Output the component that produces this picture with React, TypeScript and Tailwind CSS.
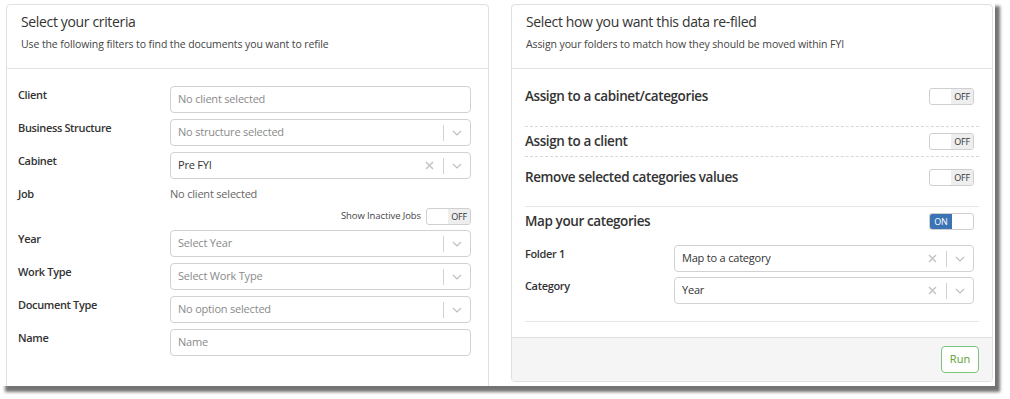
import React from "react";

const font = { fontFamily: '"Open Sans", "Noto Sans", sans-serif' };

function Chevron() {
  return (
    <svg width="10" height="6" viewBox="0 0 10 6" className="block">
      <path d="M1 1 L5 5 L9 1" fill="none" stroke="#bdbdbd" strokeWidth="1.1" />
    </svg>
  );
}

function Cross() {
  return (
    <svg width="9" height="9" viewBox="0 0 9 9" className="block">
      <path d="M1 1 L8 8 M8 1 L1 8" fill="none" stroke="#c4c4c4" strokeWidth="1.5" />
    </svg>
  );
}

function Select({ value, placeholder, clear }: { value?: string; placeholder?: string; clear?: boolean }) {
  return (
    <div className="flex h-[27px] items-center rounded-[4px] border border-[#d2d2d2] bg-white">
      <div
        className={
          "flex-1 pl-[7px] text-[11px] tracking-[-0.2px] " + (value ? "text-[#333]" : "text-[#8a8a8a]")
        }
      >
        {value ?? placeholder}
      </div>
      {clear && (
        <div className="mr-[9px]">
          <Cross />
        </div>
      )}
      <div className="h-[16px] w-px bg-[#d2d2d2]" />
      <div className="flex w-[26px] justify-center">
        <Chevron />
      </div>
    </div>
  );
}

function Input({ placeholder }: { placeholder: string }) {
  return (
    <div className="flex h-[27px] items-center rounded-[4px] border border-[#d2d2d2] bg-white pl-[7px] text-[11px] tracking-[-0.2px] text-[#8a8a8a]">
      {placeholder}
    </div>
  );
}

function Toggle({ on }: { on?: boolean }) {
  return (
    <div className="flex h-[17px] w-[45px] shrink-0 overflow-hidden rounded-[3px] border border-[#cfcfcf] bg-white text-[9px] leading-none tracking-[-0.2px]">
      {on ? (
        <>
          <div className="flex w-[22px] items-center justify-center bg-[#3a74b4] text-white">ON</div>
          <div className="flex-1" />
        </>
      ) : (
        <>
          <div className="flex-1" />
          <div className="flex w-[22px] items-center justify-center bg-[#eeeeee] text-[#333]">OFF</div>
        </>
      )}
    </div>
  );
}

function Label({ children, w }: { children: React.ReactNode; w: string }) {
  return (
    <div className={w + " shrink-0 text-[11px] leading-[17px] font-semibold tracking-[-0.35px] text-[#333]"}>
      {children}
    </div>
  );
}

function Row({ label, children }: { label: string; children: React.ReactNode }) {
  return (
    <div className="flex">
      <Label w="w-[152px]">{label}</Label>
      <div className="w-[301px]">{children}</div>
    </div>
  );
}

function Header({ title, sub }: { title: string; sub: string }) {
  return (
    <div className="h-[64px] border-b border-[#e3e3e3] pl-[14px] pt-[7px]">
      <div className="text-[14px] leading-[20px] tracking-[-0.35px] text-[#333]">{title}</div>
      <div className="mt-[4px] text-[10.5px] leading-[16px] tracking-[-0.1px] text-[#444]">{sub}</div>
    </div>
  );
}

function Section({ label, on, className }: { label: string; on?: boolean; className: string }) {
  return (
    <div className={"flex h-[21px] items-center justify-between pr-[5px] " + className}>
      <span className="text-[13.5px] font-semibold tracking-[-0.4px] text-[#333]">{label}</span>
      <Toggle on={on} />
    </div>
  );
}

export default function App() {
  return (
    <div className="h-[399px] w-[1010px] bg-white" style={font}>
      <div className="h-[386px] w-[995px] overflow-hidden bg-white shadow-[5px_6px_3px_rgba(0,0,0,0.55)]">
        <div className="flex items-start pl-[6px] pt-[4px]">
          {/* Left card */}
          <div className="h-[400px] w-[483px] rounded-[4px] border border-[#e0e0e0] bg-white">
            <Header
              title="Select your criteria"
              sub="Use the following filters to find the documents you want to refile"
            />
            <div className="pl-[11px] pt-[17px]">
              <div className="flex flex-col gap-[6px]">
                <Row label="Client">
                  <Input placeholder="No client selected" />
                </Row>
                <Row label="Business Structure">
                  <Select placeholder="No structure selected" />
                </Row>
                <Row label="Cabinet">
                  <Select value="Pre FYI" clear />
                </Row>
                <div className="flex">
                  <Label w="w-[152px]">Job</Label>
                  <div className="text-[11px] leading-[17px] tracking-[-0.2px] text-[#666]">No client selected</div>
                </div>
              </div>
              <div className="mt-[6px] flex h-[17px] w-[453px] items-center justify-end gap-[5px]">
                <span className="text-[9.5px] tracking-[-0.1px] text-[#444]">Show Inactive Jobs</span>
                <Toggle />
              </div>
              <div className="mt-[5px] flex flex-col gap-[6px]">
                <Row label="Year">
                  <Select placeholder="Select Year" />
                </Row>
                <Row label="Work Type">
                  <Select placeholder="Select Work Type" />
                </Row>
                <Row label="Document Type">
                  <Select placeholder="No option selected" />
                </Row>
                <Row label="Name">
                  <Input placeholder="Name" />
                </Row>
              </div>
            </div>
          </div>

          {/* Right card */}
          <div className="ml-[22px] w-[482px] overflow-hidden rounded-[4px] border border-[#e0e0e0] bg-white">
            <Header
              title="Select how you want this data re-filed"
              sub="Assign your folders to match how they should be moved within FYI"
            />
            <div className="px-[13px] pt-[17px] pb-[15px]">
              <Section label="Assign to a cabinet/categories" className="" />
              <div className="mt-[19px] border-t border-dashed border-[#d8d8d8]" />
              <Section label="Assign to a client" className="mt-[4px]" />
              <div className="mt-[4px] border-t border-dashed border-[#d8d8d8]" />
              <Section label="Remove selected categories values" className="mt-[10px]" />
              <div className="mt-[18px] border-t border-[#e5e5e5]" />
              <Section label="Map your categories" on className="mt-[4px]" />
              <div className="mt-[13px] flex flex-col gap-[5px] pr-[5px]">
                <div className="flex">
                  <Label w="w-[149px]">Folder 1</Label>
                  <div className="flex-1">
                    <Select value="Map to a category" clear />
                  </div>
                </div>
                <div className="flex">
                  <Label w="w-[149px]">Category</Label>
                  <div className="flex-1">
                    <Select value="Year" clear />
                  </div>
                </div>
              </div>
              <div className="mt-[17px] border-t border-[#e5e5e5]" />
            </div>
            <div className="flex h-[44px] items-center justify-end border-t border-[#e0e0e0] bg-[#f5f5f5] pr-[13px]">
              <div className="flex h-[27px] w-[38px] items-center justify-center rounded-[4px] border border-[#7cc47f] bg-white text-[11px] text-[#5a9e2f]">
                Run
              </div>
            </div>
          </div>
        </div>
      </div>
    </div>
  );
}
